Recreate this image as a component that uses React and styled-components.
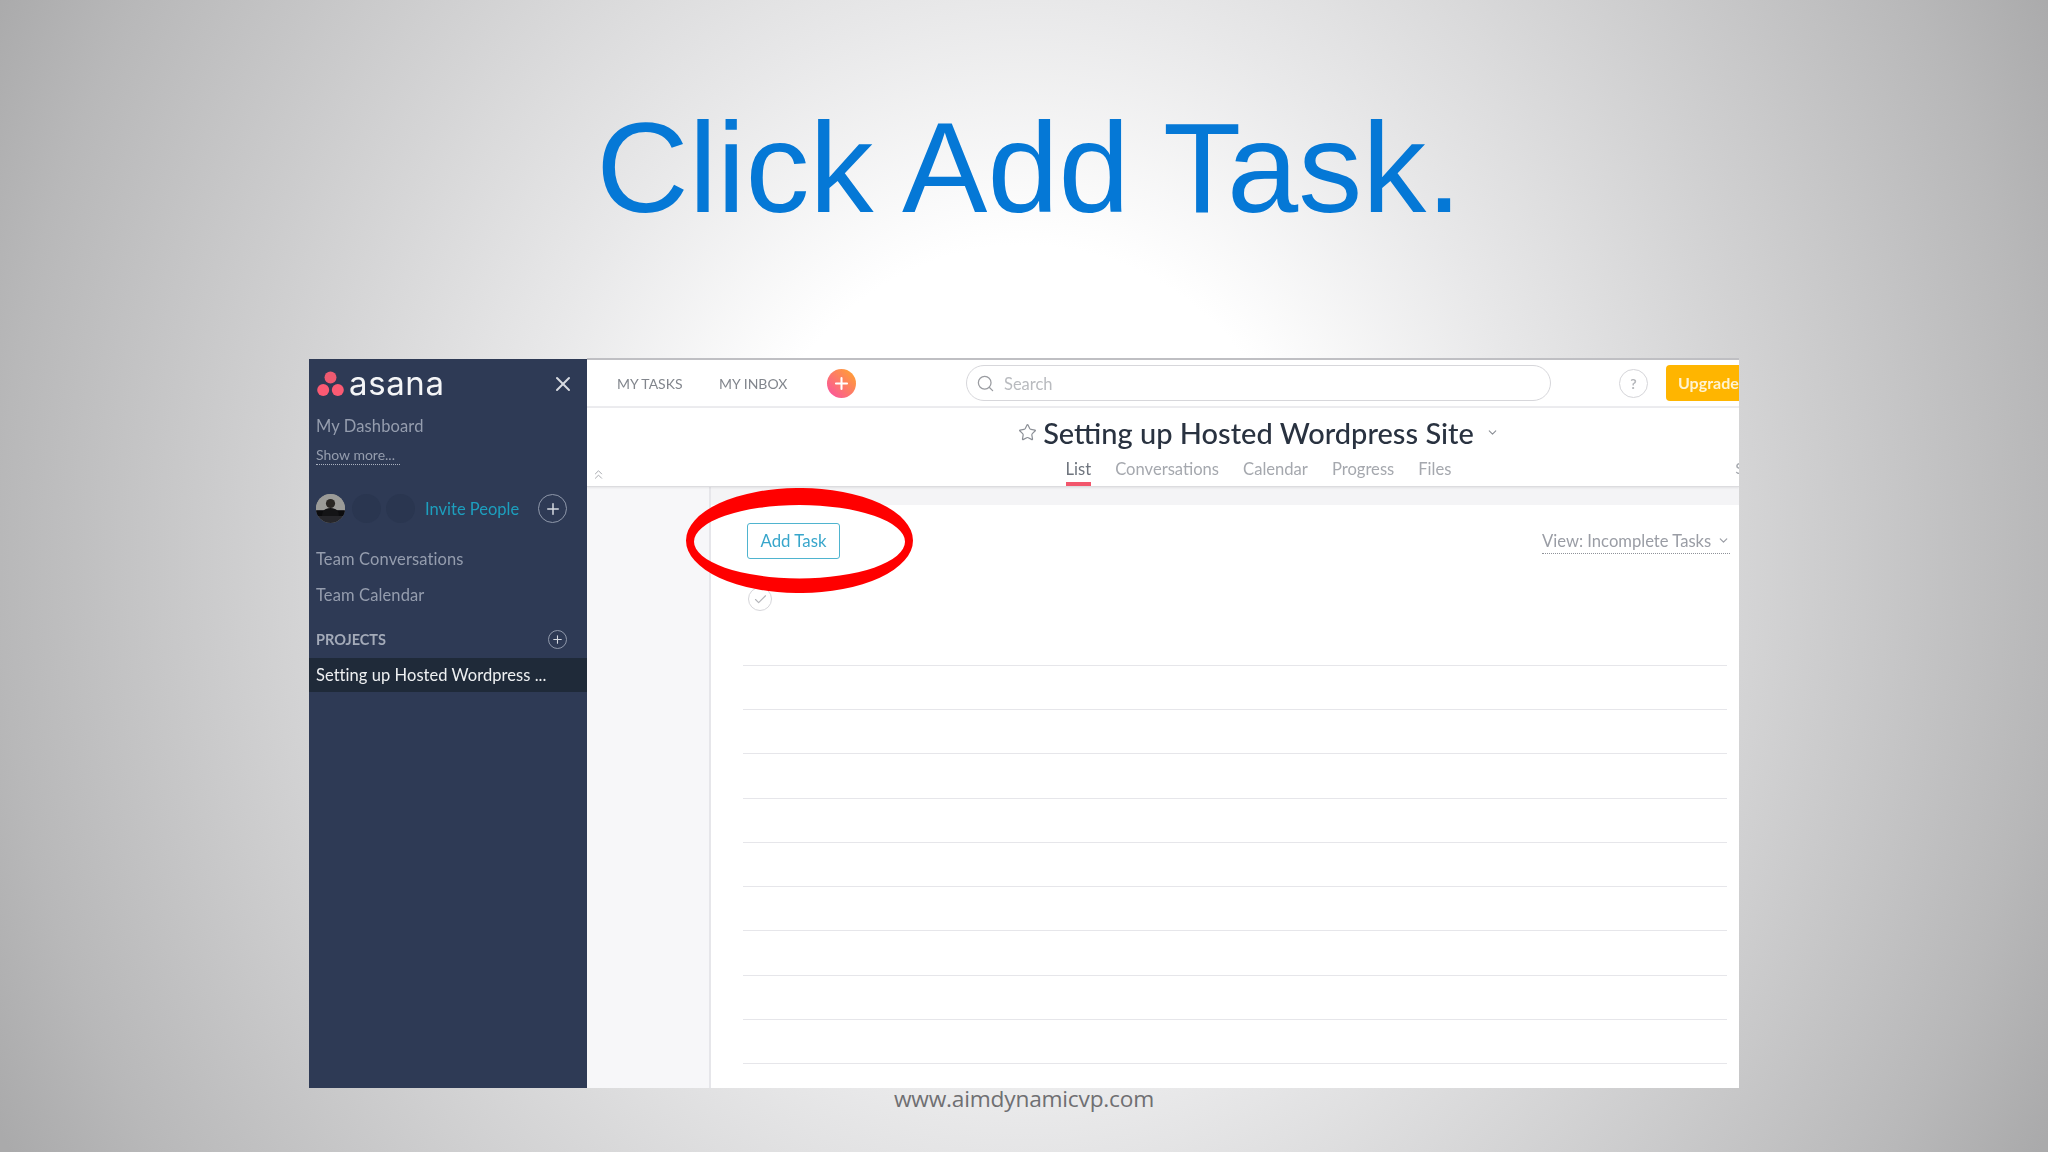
import React from "react";
import styled, { createGlobalStyle } from "styled-components";
import { X, Plus, Search, Star, ChevronDown, ChevronsUp, Check } from "lucide-react";

const Global = createGlobalStyle`
  html, body { margin: 0; padding: 0; }
  body { width: 2048px; height: 1152px; overflow: hidden; }
`;

const Slide = styled.div`
  position: relative;
  width: 2048px;
  height: 1152px;
  overflow: hidden;
  display: flex;
  flex-direction: column;
  align-items: center;
  background: radial-gradient(ellipse 1150px 1258px at 50% 48.6%, #ffffff 0%, #ffffff 25%, #e8e8e9 44.5%, #d5d5d6 62%, #b8b8b9 89%, #aaaaab 100%);
`;

const Headline = styled.h1`
  margin: 0;
  height: 358px;
  padding-top: 91px;
  box-sizing: border-box;
  font: 400 128px/154px "Liberation Sans", Arial, sans-serif;
  color: #0578d6;
  transform: translateX(5px);
`;

const Window = styled.div`
  position: relative;
  width: 1430px;
  height: 730px;
  display: flex;
  overflow: hidden;
  font-family: Lato, "Open Sans", sans-serif;
  filter: blur(0.35px);
`;

const Sidebar = styled.aside`
  width: 278px;
  flex: none;
  margin-top: 1px;
  background: #2e3a55;
  display: flex;
  flex-direction: column;
  color: #9ea6b5;
`;

const LogoRow = styled.div`
  height: 49px;
  display: flex;
  align-items: center;
  padding: 0 12px 0 8px;
  color: #d8dbe1;
`;

const Wordmark = styled.span`
  margin-left: 5px;
  font: 400 33px/1 "Inter", sans-serif;
  letter-spacing: 0.6px;
  color: #f4f5f7;
  flex: 1;
`;

const SideLink = styled.div`
  padding-left: 7px;
  height: ${(p) => p.$h || 36}px;
  margin-top: ${(p) => p.$top || 0}px;
  display: flex;
  align-items: center;
  font-size: 16.5px;
  letter-spacing: 0.12px;
  color: #959dae;
`;

const ShowMore = styled.span`
  margin-left: 7px;
  margin-top: 1px;
  align-self: flex-start;
  font-size: 14px;
  line-height: 19px;
  padding-right: 5px;
  color: #959dae;
  border-bottom: 1px dotted #aab1bf;
`;

const PeopleRow = styled.div`
  margin-top: 29px;
  height: 29px;
  padding-left: 7px;
  display: flex;
  align-items: center;
`;

const Avatar = styled.div`
  width: 29px;
  height: 29px;
  border-radius: 50%;
  margin-right: ${(p) => p.$gap}px;
  background: ${(p) => (p.$photo ? "#8f8f8d" : "#2a3650")};
  flex: none;
  overflow: hidden;
  display: flex;
`;

const Invite = styled.span`
  margin-left: 10px;
  width: 113px;
  font-size: 16.5px;
  color: #1d9fbe;
`;

const CircleBtn = styled.span`
  width: ${(p) => p.$s}px;
  height: ${(p) => p.$s}px;
  box-sizing: border-box;
  border-radius: 50%;
  border: 1px solid #8f98aa;
  color: #d6dae1;
  display: flex;
  align-items: center;
  justify-content: center;
  flex: none;
`;

const ProjectsHead = styled.div`
  height: 30px;
  margin-top: 11px;
  padding: 0 20px 0 7px;
  display: flex;
  align-items: center;
  justify-content: space-between;
  font-size: 14.5px;
  font-weight: 700;
  color: #a4abb9;
`;

const ProjectRow = styled.div`
  height: 34px;
  padding-left: 7px;
  margin-top: 4px;
  display: flex;
  align-items: center;
  background: #1f2a39;
  color: #eef0f2;
  font-size: 16.5px;
  letter-spacing: 0.05px;
  white-space: nowrap;
`;

const Main = styled.main`
  flex: 1;
  min-width: 0;
  display: flex;
  flex-direction: column;
  overflow: hidden;
  background: #fff;
  border-top: 2px solid #bfbfc3;
`;

const TopBar = styled.div`
  height: 48px;
  flex: none;
  box-sizing: border-box;
  border-bottom: 2px solid #ececef;
  display: flex;
  align-items: center;
  padding-left: 30px;
  overflow: hidden;
`;

const NavLink = styled.span`
  width: ${(p) => p.$w}px;
  flex: none;
  font-size: 14px;
  color: #82868d;
  white-space: nowrap;
`;

const AddCircle = styled.span`
  width: 29px;
  height: 29px;
  margin-left: 8px;
  flex: none;
  border-radius: 50%;
  display: flex;
  align-items: center;
  justify-content: center;
  color: #fff;
  background: linear-gradient(45deg, #fb5b93 15%, #ff9a3c 85%);
`;

const SearchBox = styled.div`
  width: 585px;
  height: 36px;
  margin-left: 110px;
  flex: none;
  box-sizing: border-box;
  border: 1.5px solid #d7d7db;
  border-radius: 18px;
  display: flex;
  align-items: center;
  gap: 9px;
  padding-left: 9px;
  font-size: 16.5px;
  color: #b9bbbf;
`;

const SearchLabel = styled.span`
  padding-top: 2px;
`;

const Help = styled.span`
  width: 29px;
  height: 29px;
  margin-left: 68px;
  flex: none;
  box-sizing: border-box;
  border: 1.5px solid #d5d5d9;
  border-radius: 50%;
  display: flex;
  align-items: center;
  justify-content: center;
  font-size: 14px;
  font-weight: 700;
  color: #b5b7bb;
`;

const Upgrade = styled.span`
  width: 90px;
  height: 36px;
  margin-left: 18px;
  flex: none;
  border-radius: 4px;
  background: #ffb500;
  color: #fff3d0;
  font-size: 16px;
  font-weight: 700;
  line-height: 36px;
  padding-left: 12px;
`;

const ProjectHeader = styled.div`
  position: relative;
  height: 79px;
  flex: none;
  box-sizing: border-box;
  padding-left: 191px;
  border-bottom: 1px solid #dcdcdf;
  box-shadow: 0 1px 2px rgba(0, 0, 0, 0.08);
  display: flex;
  flex-direction: column;
  align-items: center;
  z-index: 1;
  background: #fff;
`;

const TitleRow = styled.div`
  height: 46px;
  padding-top: 3px;
  box-sizing: border-box;
  display: flex;
  align-items: center;
  color: #8b8f96;
`;

const Title = styled.span`
  margin: 0 12px 0 6px;
  font-size: 29px;
  font-weight: 500;
  color: #293240;
  white-space: nowrap;
`;

const Tabs = styled.div`
  display: flex;
  gap: 24px;
  height: 32px;
`;

const Tab = styled.span`
  box-sizing: border-box;
  height: 32px;
  padding-top: 5px;
  font-size: 16.6px;
  line-height: 20px;
  color: ${(p) => (p.$active ? "#6e747d" : "#a5a8ae")};
  border-bottom: 4px solid ${(p) => (p.$active ? "#f2566c" : "transparent")};
`;

const Collapse = styled.span`
  position: absolute;
  left: 4px;
  bottom: 4px;
  color: #a9abb0;
  display: flex;
`;

const ClippedTab = styled.span`
  position: absolute;
  right: -5px;
  top: 50px;
  font-size: 16px;
  color: #a5a8ae;
`;

const Body = styled.div`
  flex: 1;
  display: flex;
  min-height: 0;
  background: #f4f4f6;
`;

const LeftPane = styled.div`
  width: 124px;
  flex: none;
  background: #f7f7f9;
  border-right: 2px solid #e6e6ea;
  box-sizing: border-box;
`;

const Content = styled.div`
  flex: 1;
  margin-top: 18px;
  background: #fff;
  padding: 18px 12px 0 32px;
  min-width: 0;
`;

const Toolbar = styled.div`
  display: flex;
  justify-content: space-between;
  align-items: center;
  height: 36px;
  padding-left: 4px;
  margin-right: -3px;
`;

const AddTask = styled.button`
  width: 93px;
  height: 36px;
  padding: 0 0 2px;
  box-sizing: border-box;
  border: 1.5px solid #4fb4cf;
  border-radius: 3px;
  background: #fff;
  color: #38a6cb;
  font: 400 16.8px Lato, sans-serif;
`;

const ViewPick = styled.span`
  display: flex;
  align-items: center;
  justify-content: space-between;
  width: 188px;
  height: 26px;
  box-sizing: border-box;
  border-bottom: 1px dotted #8f9299;
  font-size: 16.6px;
  color: #9a9da5;
  white-space: nowrap;
`;

const FirstCheck = styled.span`
  display: flex;
  align-items: center;
  justify-content: center;
  width: 24px;
  height: 24px;
  margin: 28px 0 0 5px;
  box-sizing: border-box;
  border: 1.5px solid #d6d6da;
  border-radius: 50%;
  color: #b4b5ba;
`;

const Rows = styled.div`
  margin-top: 11px;
`;

const Row = styled.div`
  height: 44.22px;
  box-sizing: border-box;
  border-bottom: 1px solid #e6e6ea;
`;

const FirstRow = styled(Row)`
  height: 44px;
`;

const Ring = styled.svg`
  position: absolute;
  left: 377px;
  top: 130px;
  width: 227px;
  height: 105px;
  z-index: 2;
`;

const Footer = styled.div`
  width: 100%;
  text-align: center;
  font: 400 22.7px/30px "Open Sans", sans-serif;
  letter-spacing: -0.2px;
  color: #6f6f72;
  margin-top: -4px;
`;

const AsanaDots = () => (
  <svg width="27" height="26" viewBox="0 0 27 26">
    <circle cx="13.5" cy="6.5" r="6" fill="#ee5a70" />
    <circle cx="6.2" cy="19" r="6" fill="#fb5a73" />
    <circle cx="20.8" cy="19" r="6" fill="#fb5a73" />
  </svg>
);

const PersonPhoto = () => (
  <svg width="29" height="29" viewBox="0 0 29 29">
    <rect width="29" height="16" fill="#9b9b98" />
    <rect y="16" width="29" height="13" fill="#26262a" />
    <rect y="17" width="29" height="5" fill="#0c0c0e" />
    <circle cx="14.5" cy="9.5" r="4.6" fill="#2a2724" />
    <path d="M6 22c0-6 4-8 8.5-8s8.5 2 8.5 8z" fill="#141416" />
  </svg>
);

const rowCount = Array.from({ length: 9 });

export default function App() {
  return (
    <Slide>
      <Global />
      <Headline>Click Add Task.</Headline>
      <Window>
        <Sidebar>
          <LogoRow>
            <AsanaDots />
            <Wordmark>asana</Wordmark>
            <X size={24} strokeWidth={2} />
          </LogoRow>
          <SideLink>My Dashboard</SideLink>
          <ShowMore>Show more...</ShowMore>
          <PeopleRow>
            <Avatar $gap={7} $photo><PersonPhoto /></Avatar>
            <Avatar $gap={5} />
            <Avatar $gap={0} />
            <Invite>Invite People</Invite>
            <CircleBtn $s={29}><Plus size={18} strokeWidth={2} /></CircleBtn>
          </PeopleRow>
          <SideLink $top={18}>Team Conversations</SideLink>
          <SideLink>Team Calendar</SideLink>
          <ProjectsHead>
            PROJECTS
            <CircleBtn $s={19}><Plus size={13} strokeWidth={2} /></CircleBtn>
          </ProjectsHead>
          <ProjectRow>Setting up Hosted Wordpress ...</ProjectRow>
        </Sidebar>
        <Main>
          <TopBar>
            <NavLink $w={102}>MY TASKS</NavLink>
            <NavLink $w={100}>MY INBOX</NavLink>
            <AddCircle><Plus size={19} strokeWidth={2.6} /></AddCircle>
            <SearchBox>
              <Search size={19} strokeWidth={1.6} color="#9a9ca1" />
              <SearchLabel>Search</SearchLabel>
            </SearchBox>
            <Help>?</Help>
            <Upgrade>Upgrade</Upgrade>
          </TopBar>
          <ProjectHeader>
            <TitleRow>
              <Star size={19} strokeWidth={1.5} />
              <Title>Setting up Hosted Wordpress Site</Title>
              <ChevronDown size={13} strokeWidth={2} />
            </TitleRow>
            <Tabs>
              <Tab $active>List</Tab>
              <Tab>Conversations</Tab>
              <Tab>Calendar</Tab>
              <Tab>Progress</Tab>
              <Tab>Files</Tab>
            </Tabs>
            <Collapse><ChevronsUp size={15} strokeWidth={1.6} /></Collapse>
            <ClippedTab>S</ClippedTab>
          </ProjectHeader>
          <Body>
            <LeftPane />
            <Content>
              <Toolbar>
                <AddTask>Add Task</AddTask>
                <ViewPick>View: Incomplete Tasks <ChevronDown size={13} strokeWidth={2.2} /></ViewPick>
              </Toolbar>
              <FirstCheck><Check size={15} strokeWidth={1.8} /></FirstCheck>
              <Rows>
                <FirstRow />
                {rowCount.map((_, i) => <Row key={i} />)}
              </Rows>
            </Content>
          </Body>
        </Main>
        <Ring viewBox="0 0 227 105">
          <path
            fill="#ff0000"
            fillRule="evenodd"
            d="M0 52.5a113.5 52.5 0 1 0 227 0a113.5 52.5 0 1 0 -227 0Z M8 53.7a105.5 36.7 0 1 0 211 0a105.5 36.7 0 1 0 -211 0Z"
          />
        </Ring>
      </Window>
      <Footer>www.aimdynamicvp.com</Footer>
    </Slide>
  );
}
